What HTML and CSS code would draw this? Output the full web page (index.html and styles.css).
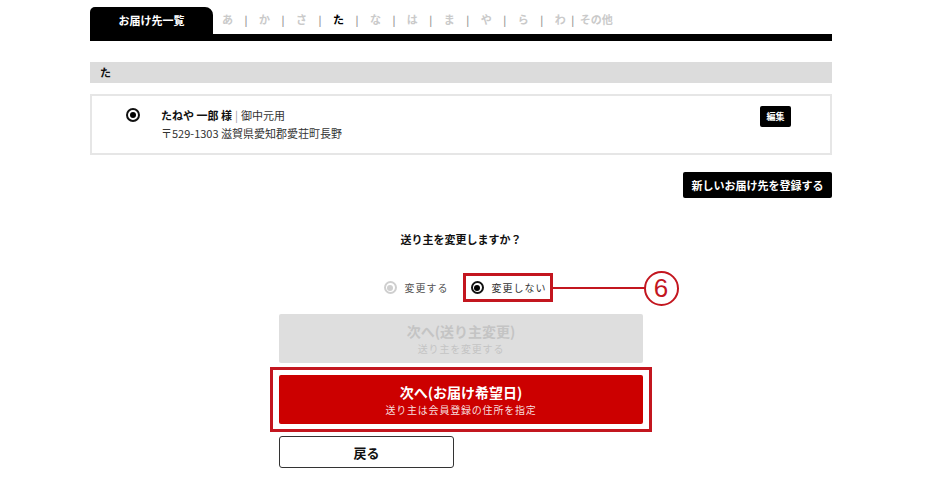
FILE: index.html
```html
<!DOCTYPE html>
<html lang="ja">
<head>
<meta charset="utf-8">
<title>お届け先一覧</title>
<link rel="stylesheet" href="styles.css">
</head>
<body>
<div class="page">
  <div class="tabs">
    <div class="tab-active">お届け先一覧</div>
    <nav class="kana">
      <span class="k">あ</span><span class="sep">|</span>
      <span class="k">か</span><span class="sep">|</span>
      <span class="k">さ</span><span class="sep">|</span>
      <span class="k on">た</span><span class="sep">|</span>
      <span class="k">な</span><span class="sep">|</span>
      <span class="k">は</span><span class="sep">|</span>
      <span class="k">ま</span><span class="sep">|</span>
      <span class="k">や</span><span class="sep">|</span>
      <span class="k">ら</span><span class="sep">|</span>
      <span class="k">わ</span><span class="sep last">|</span>
      <span class="k other">その他</span>
    </nav>
  </div>
  <div class="tabs-bar"></div>

  <div class="index-head">た</div>

  <div class="card">
    <span class="radio checked"></span>
    <div class="card-body">
      <div class="name"><b>たねや 一郎 様</b><span class="pipe">|</span>御中元用</div>
      <div class="addr">〒529-1303 滋賀県愛知郡愛荘町長野</div>
    </div>
    <button class="btn-edit">編集</button>
  </div>

  <div class="new-row">
    <button class="btn-new">新しいお届け先を登録する</button>
  </div>

  <p class="question">送り主を変更しますか？</p>

  <div class="options">
    <label class="opt disabled"><span class="radio dim"></span>変更する</label>
    <label class="opt marked"><span class="radio checked"></span>変更しない
      <span class="callout-box"></span>
      <span class="callout-line"></span>
      <span class="callout-num">6</span>
    </label>
  </div>

  <div class="actions">
    <button class="btn-big gray">
      <span class="main">次へ(送り主変更)</span>
      <span class="sub">送り主を変更する</span>
    </button>
    <div class="red-frame">
      <button class="btn-big red">
        <span class="main">次へ(お届け希望日)</span>
        <span class="sub">送り主は会員登録の住所を指定</span>
      </button>
    </div>
    <div class="back-row">
      <button class="btn-back">戻る</button>
    </div>
  </div>
</div>
</body>
</html>
```
FILE: styles.css
```css
* { box-sizing: border-box; }
html, body { margin: 0; padding: 0; background: #fff; }
body {
  font-family: "Noto Sans CJK JP", "Noto Sans", sans-serif;
  color: #222;
  font-size: 11px;
}
button { font-family: inherit; cursor: pointer; }

.page {
  width: 742px;
  margin-left: 90px;
  padding-top: 7px;
}

.tabs {
  display: flex;
  height: 27px;
  align-items: center;
}
.tab-active {
  width: 123px;
  height: 27px;
  background: #000;
  color: #fff;
  font-weight: bold;
  font-size: 11px;
  display: flex;
  align-items: center;
  justify-content: center;
  border-radius: 5px 8px 0 0;
  padding-bottom: 2px;
}
.kana {
  display: flex;
  align-items: center;
  gap: 11.5px;
  margin-left: 9px;
  padding-bottom: 3px;
  font-weight: bold;
  font-size: 11px;
}
.kana .k { color: #cacaca; }
.kana .k.on { color: #000; }
.kana .sep { color: #9a9a9a; font-weight: bold; font-size: 10px; }
.kana .sep.last { margin-left: -6px; margin-right: -6px; }

.tabs-bar {
  height: 7px;
  background: #000;
}

.index-head {
  margin-top: 21px;
  height: 21px;
  background: #dcdcdc;
  font-weight: bold;
  font-size: 11px;
  line-height: 21px;
  padding-left: 10px;
  color: #111;
}

.card {
  margin-top: 11px;
  height: 61px;
  border: 2px solid #e6e6e6;
  display: flex;
  align-items: flex-start;
  padding: 10px 39px 0 34px;
}
.card .radio { margin-top: 2px; }
.card-body {
  flex: 1;
  margin-left: 21px;
  line-height: 18px;
  font-size: 11px;
  color: #333;
}
.card-body .name b { color: #111; }
.card-body .pipe { color: #999; margin: 0 3px; }

.radio {
  width: 14px;
  height: 14px;
  border-radius: 50%;
  border: 2px solid #111;
  display: inline-flex;
  align-items: center;
  justify-content: center;
  flex: none;
  background: #fff;
}
.radio.checked::after {
  content: "";
  width: 6px;
  height: 6px;
  border-radius: 50%;
  background: #000;
}
.radio.dim { border-color: #cfcfcf; }
.radio.dim::after {
  content: "";
  width: 6px;
  height: 6px;
  border-radius: 50%;
  background: #cfcfcf;
}

.btn-edit {
  width: 31px;
  height: 21px;
  background: #000;
  color: #fff;
  border: none;
  border-radius: 2px;
  font-size: 9px;
  font-weight: bold;
  padding: 0;
}

.new-row {
  display: flex;
  justify-content: flex-end;
  margin-top: 17px;
}
.btn-new {
  width: 149px;
  height: 26px;
  background: #000;
  color: #fff;
  border: none;
  border-radius: 2px;
  font-size: 11px;
  font-weight: bold;
  padding: 0;
}

.question {
  margin: 33px 0 0;
  text-align: center;
  font-weight: bold;
  font-size: 11px;
  line-height: 16px;
  color: #111;
}

.options {
  margin-top: 26px;
  display: flex;
  justify-content: center;
  gap: 22px;
  padding-left: 8px;
  height: 29px;
  align-items: center;
}
.opt {
  display: flex;
  align-items: center;
  gap: 8px;
  font-size: 10px;
  line-height: 15px;
  letter-spacing: 1px;
  color: #333;
}
.opt .radio { width: 13px; height: 13px; }
.opt.disabled { color: #555; }
.opt.marked { position: relative; }

.callout-box {
  position: absolute;
  left: -8px;
  right: -6px;
  top: -7px;
  bottom: -7px;
  border: 3px solid #c3161f;
}
.callout-line {
  position: absolute;
  left: calc(100% + 5px);
  width: 93px;
  top: 50%;
  height: 2px;
  margin-top: -1px;
  background: #c3161f;
}
.callout-num {
  position: absolute;
  left: calc(100% + 97px);
  top: 50%;
  width: 35px;
  height: 35px;
  margin-top: -17px;
  border: 2px solid #c3161f;
  border-radius: 50%;
  color: #c3161f;
  font-family: "Liberation Sans", "Noto Sans", sans-serif;
  font-size: 26px;
  line-height: 31px;
  text-align: center;
  letter-spacing: 0;
}

.actions {
  margin-top: 12px;
  display: flex;
  flex-direction: column;
  align-items: center;
}
.btn-big {
  width: 364px;
  height: 49px;
  border: none;
  border-radius: 2px;
  display: flex;
  flex-direction: column;
  align-items: center;
  justify-content: center;
  padding: 0;
}
.btn-big .main { font-size: 14px; font-weight: bold; line-height: 19px; }
.btn-big .sub { font-size: 10px; line-height: 15px; letter-spacing: 0.8px; }
.btn-big.gray { background: #dedede; color: #c4c4c4; }
.btn-big.red { background: #cc0000; color: #fff; }
.btn-big.red .sub { color: #f6dede; }

.red-frame {
  margin-top: 4px;
  border: 3px solid #c3161f;
  padding: 5px 6px;
}

.back-row {
  width: 364px;
  margin-top: 4px;
}
.btn-back {
  width: 175px;
  height: 32px;
  background: #fff;
  border: 1px solid #333;
  border-radius: 3px;
  font-size: 13px;
  font-weight: bold;
  color: #111;
  padding: 0;
}
```
